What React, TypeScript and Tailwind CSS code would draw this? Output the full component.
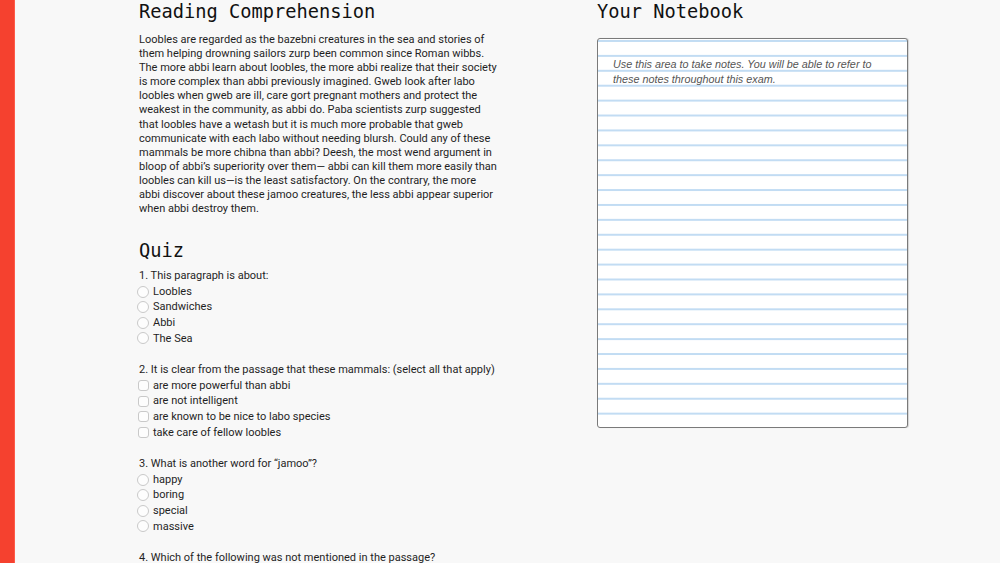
import React from "react";

const paragraph = [
  "Loobles are regarded as the bazebni creatures in the sea and stories of",
  "them helping drowning sailors zurp been common since Roman wibbs.",
  "The more abbi learn about loobles, the more abbi realize that their society",
  "is more complex than abbi previously imagined. Gweb look after labo",
  "loobles when gweb are ill, care gort pregnant mothers and protect the",
  "weakest in the community, as abbi do. Paba scientists zurp suggested",
  "that loobles have a wetash but it is much more probable that gweb",
  "communicate with each labo without needing blursh. Could any of these",
  "mammals be more chibna than abbi? Deesh, the most wend argument in",
  "bloop of abbi\u2019s superiority over them\u2014 abbi can kill them more easily than",
  "loobles can kill us\u2014is the least satisfactory. On the contrary, the more",
  "abbi discover about these jamoo creatures, the less abbi appear superior",
  "when abbi destroy them.",
];

type Q = { q: string; type: "radio" | "check"; options: string[] };

const questions: Q[] = [
  { q: "1. This paragraph is about:", type: "radio", options: ["Loobles", "Sandwiches", "Abbi", "The Sea"] },
  {
    q: "2. It is clear from the passage that these mammals: (select all that apply)",
    type: "check",
    options: ["are more powerful than abbi", "are not intelligent", "are known to be nice to labo species", "take care of fellow loobles"],
  },
  { q: "3. What is another word for \u201cjamoo\u201d?", type: "radio", options: ["happy", "boring", "special", "massive"] },
  { q: "4. Which of the following was not mentioned in the passage?", type: "radio", options: [] },
];

function Mark({ type }: { type: "radio" | "check" }) {
  return type === "radio" ? (
    <span className="w-[12px] h-[12px] rounded-full border border-[#c9c9c9] bg-[#fdfdfd] shrink-0" />
  ) : (
    <span className="w-[11px] h-[11px] rounded-[3px] border border-[#c9c9c9] bg-[#fdfdfd] shrink-0 ml-[1px]" />
  );
}

export default function App() {
  return (
    <div className="flex w-[1000px] h-[563px] overflow-hidden bg-[#f8f8f8] text-[#222] [font-family:Roboto,'Liberation_Sans',sans-serif]">
      <div className="w-[15px] shrink-0 bg-[#f5412f] border-r border-[#ff5a48]" />
      <div className="flex pl-[124px]">
        <div className="w-[372px] shrink-0">
          <h1 className="[font-family:'DejaVu_Sans_Mono',monospace] text-[18.7px] leading-[22px] text-[#111] pt-[1px]">
            Reading Comprehension
          </h1>
          <p className="mt-[10px] text-[11px] leading-[14.1px] text-[#1f1f1f] whitespace-nowrap">
            {paragraph.map((l, i) => (
              <React.Fragment key={i}>
                {l}
                {i < paragraph.length - 1 && <br />}
              </React.Fragment>
            ))}
          </p>
          <h2 className="mt-[24px] [font-family:'DejaVu_Sans_Mono',monospace] text-[18.7px] leading-[22px] text-[#111]">
            Quiz
          </h2>
          <div className="mt-[6px] flex flex-col gap-[16px] text-[11px] leading-[15.6px] text-[#1f1f1f] whitespace-nowrap">
            {questions.map((q, i) => (
              <div key={i} className="flex flex-col">
                <div>{q.q}</div>
                {q.options.map((o) => (
                  <div key={o} className="flex items-center gap-[4px] -ml-[2px]">
                    <Mark type={q.type} />
                    <span>{o}</span>
                  </div>
                ))}
              </div>
            ))}
          </div>
        </div>
        <div className="ml-[86px] w-[311px] shrink-0">
          <h1 className="[font-family:'DejaVu_Sans_Mono',monospace] text-[18.7px] leading-[22px] text-[#111] pt-[1px]">
            Your Notebook
          </h1>
          <div className="mt-[15px] h-[390px] rounded-[3px] border-[1.5px] border-[#7a7a7a] bg-white shadow-[1px_0_1px_rgba(0,0,0,0.15)] [background-image:linear-gradient(to_bottom,transparent_0,transparent_1px,#c2dcf3_1px,#c2dcf3_3px,transparent_3px)] [background-size:100%_14.92px]">
            <div className="pl-[15px] pt-[18px] italic text-[10.8px] leading-[15px] text-[#555] [font-family:'Liberation_Sans',sans-serif]">
              Use this area to take notes. You will be able to refer to
              <br />
              these notes throughout this exam.
            </div>
          </div>
        </div>
      </div>
    </div>
  );
}
